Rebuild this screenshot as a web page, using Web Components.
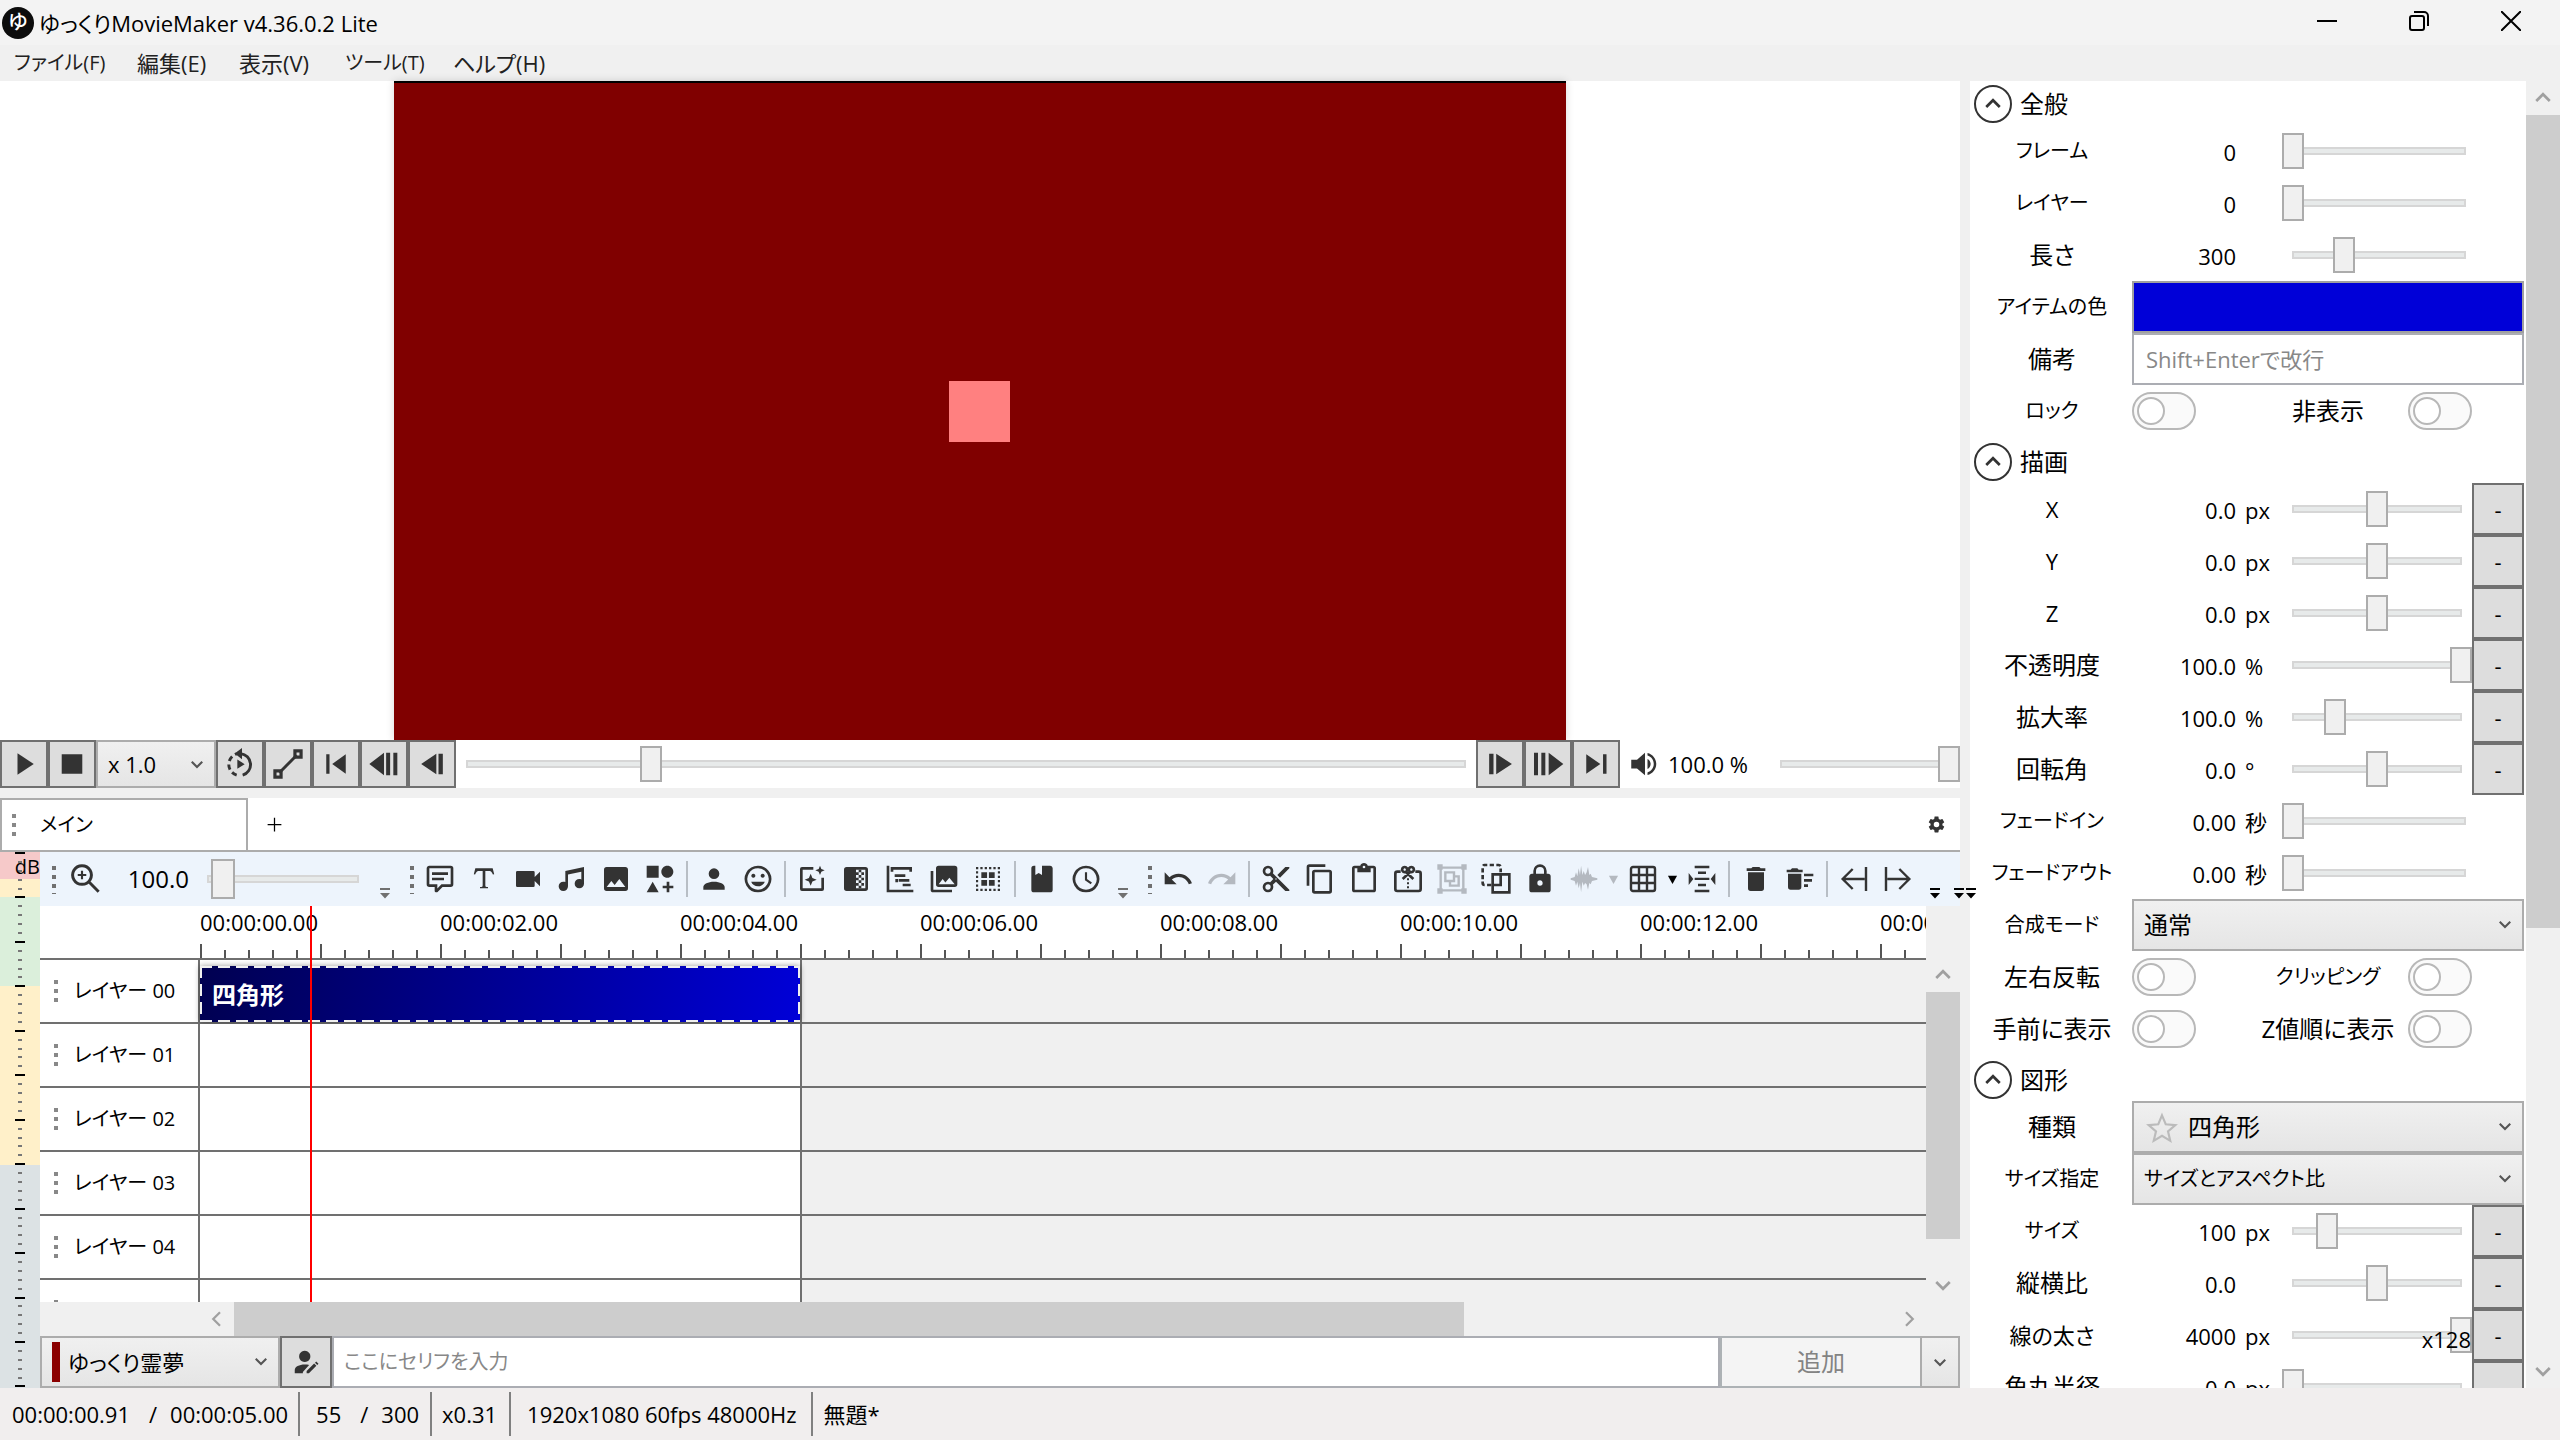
<!DOCTYPE html>
<html lang="ja">
<head>
<meta charset="utf-8">
<title>ゆっくりMovieMaker v4.36.0.2 Lite</title>
<style>
  html, body { margin: 0; height: 100%; overflow: hidden; }
  body { font-family: "Open Sans", "Noto Sans CJK JP", sans-serif; font-size: 22px; line-height: 32px; color: #000; background: #f0f0f0; }
</style>
</head>
<body>
<ymm-app></ymm-app>
<script>
const BASE = `
  :host { display: block; box-sizing: border-box; }
  *, *::before, *::after { box-sizing: border-box; }
  button, input, select { font: inherit; color: inherit; margin: 0; border-radius: 0; font-feature-settings: inherit; }
  button { padding: 0; display: flex; align-items: center; justify-content: center; background: none; border: 0; }
  svg { display: block; flex: none; }
  .kana, input.kana, select.kana { font-size: 20px; }
  .kanji, select.kanji { font-size: 24px; }
`;
const scriptClass = t => {
  const kana = (t.match(/[\u3040-\u30ff]/g) || []).length;
  if (kana > t.length / 2) return 'kana';
  return /[\u4e00-\u9fff]/.test(t) && kana < 2 ? 'kanji' : '';
};
const define = (name, css, html) => customElements.define(name, class extends HTMLElement {
  connectedCallback() {
    if (this.shadowRoot) return;
    const root = this.attachShadow({ mode: 'open' });
    root.innerHTML = `<style>${BASE}${css}</style>${typeof html === 'function' ? html(this) : html}`;
  }
});

/* 24-unit icon shapes */
const F = d => `<path d="${d}"/>`;
const S = (d, w = 2, extra = '') => `<path d="${d}" fill="none" stroke="currentColor" stroke-width="${w}" ${extra}/>`;
const ICONS = {
  play: F('M6 2v20l15-10z'),
  stop: F('M2.500 3h19v18h-19z'),
  loop: S('M12.5 4.2A8.3 8.3 0 0 1 14 20.4', 2.2) + S('M9.5 20.3A8.3 8.3 0 0 1 9.5 4.4', 2.2, 'stroke-dasharray="4 2.6"') + F('M13.5 0v8.4L8 4.2zM10 8.6v7l5.5-3.5z'),
  curve: S('M5.5 18.5L18.5 5.5', 2.2) + S('M2.2 17.2h4.6v4.6H2.2zM17.2 2.2h4.6v4.6h-4.6z', 2.4),
  first: F('M3 3h3v18H3zM21 3v18L8.500 12z'),
  back2: F('M12 3.5v17L1 12zM13.6 3.5h3v17h-3zM19 3.5h3v17h-3z'),
  back1: F('M16 2.500v19L2 12zM18 2.500h4v19h-4z'),
  fwd1: F('M2 2.500h4v19H2zM8.500 2.500v19L23 12z'),
  fwd2: F('M1.5 3.5h3v17h-3zM7 3.5h3v17H7zM12.5 3.5v17L23.5 12z'),
  last: F('M3 3v18L16 12zM18.500 3h3.200v18h-3.200z'),
  volume: F('M14 3.23v2.06c2.89.86 5 3.54 5 6.71s-2.11 5.84-5 6.7v2.07c4-.91 7-4.49 7-8.77s-3-7.86-7-8.77M16.5 12c0-1.77-1-3.29-2.5-4.03V16c1.5-.71 2.5-2.24 2.5-4M1 8.5v7h4.6L12 21V3L5.6 8.5z'),
  gear: F('M12,15.5A3.5,3.5 0 0,1 8.5,12A3.5,3.5 0 0,1 12,8.5A3.5,3.5 0 0,1 15.5,12A3.5,3.5 0 0,1 12,15.5M19.43,12.97C19.47,12.65 19.5,12.33 19.5,12C19.5,11.67 19.47,11.34 19.43,11L21.54,9.37C21.73,9.22 21.78,8.95 21.66,8.73L19.66,5.27C19.54,5.05 19.27,4.96 19.05,5.05L16.56,6.05C16.04,5.66 15.5,5.32 14.87,5.07L14.5,2.42C14.46,2.18 14.25,2 14,2H10C9.75,2 9.54,2.18 9.5,2.42L9.13,5.07C8.5,5.32 7.96,5.66 7.44,6.05L4.95,5.05C4.73,4.96 4.46,5.05 4.34,5.27L2.34,8.73C2.21,8.95 2.27,9.22 2.46,9.37L4.57,11C4.53,11.34 4.5,11.67 4.5,12C4.5,12.33 4.53,12.65 4.57,12.97L2.46,14.63C2.27,14.78 2.21,15.05 2.34,15.27L4.34,18.73C4.46,18.95 4.73,19.03 4.95,18.95L7.44,17.94C7.96,18.34 8.5,18.68 9.13,18.93L9.5,21.58C9.54,21.82 9.75,22 10,22H14C14.25,22 14.46,21.82 14.5,21.58L14.87,18.93C15.5,18.67 16.04,18.34 16.56,17.94L19.05,18.95C19.27,19.03 19.54,18.95 19.66,18.73L21.66,15.27C21.78,15.05 21.73,14.78 21.54,14.63L19.43,12.97Z'),
  plus: S('M12 1v22M1 12h22', 2),
  zoomin: S('M9 2a7 7 0 1 0 .01 0M14.3 14.3L21.5 21.5', 2.2) + S('M9 5.8v6.4M5.8 9h6.4', 1.6),
  comment: F('M9,22A1,1 0 0,1 8,21V18H4A2,2 0 0,1 2,16V4C2,2.89 2.9,2 4,2H20A2,2 0 0,1 22,4V16A2,2 0 0,1 20,18H13.9L10.2,21.71C10,21.9 9.75,22 9.5,22V22H9M10,16V19.08L13.08,16H20V4H4V16H10M6,7H18V9H6V7M6,11H15V13H6V11Z'),
  text: F('M18.5,4L19.66,8.35L18.7,8.61C18.25,7.74 17.79,6.87 17.26,6.43C16.73,6 16.11,6 15.5,6H13V16.5C13,17 13,17.5 13.33,17.75C13.67,18 14.33,18 15,18V19H9V18C9.67,18 10.33,18 10.67,17.75C11,17.5 11,17 11,16.5V6H8.5C7.89,6 7.27,6 6.74,6.43C6.21,6.87 5.75,7.74 5.3,8.61L4.34,8.35L5.5,4H18.5Z'),
  video: F('M17,10.5V7A1,1 0 0,0 16,6H4A1,1 0 0,0 3,7V17A1,1 0 0,0 4,18H16A1,1 0 0,0 17,17V13.5L21,17.5V6.5L17,10.5Z'),
  music: F('M21,3V15.5A3.5,3.5 0 0,1 17.5,19A3.5,3.5 0 0,1 14,15.5A3.5,3.5 0 0,1 17.5,12C18.04,12 18.55,12.12 19,12.34V6.47L9,8.6V17.5A3.5,3.5 0 0,1 5.5,21A3.5,3.5 0 0,1 2,17.5A3.5,3.5 0 0,1 5.5,14C6.04,14 6.55,14.12 7,14.34V6L21,3Z'),
  image: F('M8.5,13.5L11,16.5L14.5,12L19,18H5M21,19V5C21,3.89 20.1,3 19,3H5A2,2 0 0,0 3,5V19A2,2 0 0,0 5,21H19A2,2 0 0,0 21,19Z'),
  shapes: F('M2,2H11V11H2V2M17.5,2C20,2 22,4 22,6.5C22,9 20,11 17.5,11C15,11 13,9 13,6.5C13,4 15,2 17.5,2M6.5,14L11,22H2L6.5,14M19,17H22V19H19V22H17V19H14V17H17V14H19V17Z'),
  person: F('M12,4A4,4 0 0,1 16,8A4,4 0 0,1 12,12A4,4 0 0,1 8,8A4,4 0 0,1 12,4M12,14C16.42,14 20,15.79 20,18V20H4V18C4,15.79 7.58,14 12,14Z'),
  smile: S('M12 3a9 9 0 1 0 .01 0', 2) + F('M12,17.5C14.33,17.5 16.3,16.04 17.11,14H6.89C7.69,16.04 9.67,17.5 12,17.5M8.5 8A1.5 1.5 0 1 0 8.51 8M15.5 8A1.5 1.5 0 1 0 15.51 8'),
  effect: S('M13 4H4.5a.5.5 0 0 0-.5.5v15a.5.5 0 0 0 .5.5h15a.5.5 0 0 0 .5-.5V11', 2) + F('M11 8l1.3 3.2L15.5 12.5l-3.2 1.3L11 17l-1.3-3.2L6.5 12.5l3.2-1.3zM18 2l1 2.5L21.5 5.5 19 6.5 18 9l-1-2.5L14.5 5.5 17 4.5z'),
  checker: F('M5 3h14a2 2 0 0 1 2 2v14a2 2 0 0 1-2 2H5a2 2 0 0 1-2-2V5a2 2 0 0 1 2-2zM12 5v14h7V5z" fill-rule="evenodd') + F('M10 5h2v2h-2zM14 5h2v2h-2zM12 7h2v2h-2zM16 7h2v2h-2zM14 9h2v2h-2zM12 11h2v2h-2zM16 11h2v2h-2zM14 13h2v2h-2zM12 15h2v2h-2zM16 15h2v2h-2zM14 17h2v2h-2z'),
  chart: S('M3 2v19h19', 2) + S('M6 6.500v-2.500h14v2.500M8 9.500h8M11 13h8M14 16.500h6M9.500 12v2.500', 2),
  images: F('M22,16V4A2,2 0 0,0 20,2H8A2,2 0 0,0 6,4V16A2,2 0 0,0 8,18H20A2,2 0 0,0 22,16M11,12L13.03,14.71L16,11L20,16H8M2,6V20A2,2 0 0,0 4,22H18V20H4V6'),
  scene: S('M3 3.8h18M3 20.2h18M3.8 3v18M20.2 3v18', 1.6, 'stroke-dasharray="1.7 1.56"') + F('M7 7h4.3v4.3H7zM12.7 7H17v4.3h-4.3zM7 12.7h4.3V17H7zM12.7 12.7H17V17h-4.3z'),
  book: F('M18,22A2,2 0 0,0 20,20V4C20,2.89 19.1,2 18,2H12V9L9.5,7.5L7,9V2H6A2,2 0 0,0 4,4V20A2,2 0 0,0 6,22H18Z'),
  clock: S('M12 3a9 9 0 1 0 .01 0', 2) + S('M12 7v5.5l4 2.8', 1.6),
  undo: F('M12.5,8C9.85,8 7.45,9 5.6,10.6L2,7V16H11L7.38,12.38C8.77,11.22 10.54,10.5 12.5,10.5C16.04,10.5 19.05,12.81 20.1,16L22.47,15.22C21.08,11.03 17.15,8 12.5,8Z'),
  redo: F('M11.5,8C14.15,8 16.55,9 18.4,10.6L22,7V16H13L16.62,12.38C15.23,11.22 13.46,10.5 11.5,10.5C7.96,10.5 4.95,12.81 3.9,16L1.53,15.22C2.92,11.03 6.85,8 11.5,8Z'),
  cut: F('M19,3L13,9L15,11L22,4V3M12,12.5A0.5,0.5 0 0,1 11.5,12A0.5,0.5 0 0,1 12,11.5A0.5,0.5 0 0,1 12.5,12A0.5,0.5 0 0,1 12,12.5M6,20A2,2 0 0,1 4,18C4,16.89 4.9,16 6,16A2,2 0 0,1 8,18C8,19.11 7.1,20 6,20M6,8A2,2 0 0,1 4,6C4,4.89 4.9,4 6,4A2,2 0 0,1 8,6C8,7.11 7.1,8 6,8M9.64,7.64C9.87,7.14 10,6.59 10,6A4,4 0 0,0 6,2A4,4 0 0,0 2,6A4,4 0 0,0 6,10C6.59,10 7.14,9.87 7.64,9.64L10,12L7.64,14.36C7.14,14.13 6.59,14 6,14A4,4 0 0,0 2,18A4,4 0 0,0 6,22A4,4 0 0,0 10,18C10,17.41 9.87,16.86 9.64,16.36L12,14L19,21H22V20L9.64,7.64Z'),
  copy: F('M19,21H8V7H19M19,5H8A2,2 0 0,0 6,7V21A2,2 0 0,0 8,23H19A2,2 0 0,0 21,21V7A2,2 0 0,0 19,5M16,1H4A2,2 0 0,0 2,3V17H4V3H16V1Z'),
  paste: F('M19,20H5V4H7V7H17V4H19M12,2A1,1 0 0,1 13,3A1,1 0 0,1 12,4A1,1 0 0,1 11,3A1,1 0 0,1 12,2M19,2H14.82C14.4,0.84 13.3,0 12,0C10.7,0 9.6,0.84 9.18,2H5A2,2 0 0,0 3,4V20A2,2 0 0,0 5,22H19A2,2 0 0,0 21,20V4A2,2 0 0,0 19,2Z'),
  split: S('M6.500 6.500H4A1.500 1.500 0 0 0 2.500 8v11.500A1.500 1.500 0 0 0 4 21h16a1.500 1.500 0 0 0 1.500-1.500V8A1.500 1.500 0 0 0 20 6.500h-2.500', 2) + S('M12 11.500v8.500', 1.500, 'stroke-dasharray="1.500 1.500"') + S('M9.500 3a1.900 1.900 0 1 0 .01 0M14.500 3a1.900 1.900 0 1 0 .01 0M10.200 6.500l5.800 5.500M13.800 6.500L8 12', 2),
  group: S('M3.5 3.5h17v17h-17z', 1.8) + F('M1 1h4v4H1zM19 1h4v4h-4zM1 19h4v4H1zM19 19h4v4h-4z') + S('M7 7h6.500v6.500H7zM13.500 10H17v7h-6.500v-3.500', 1.8),
  ungroup: S('M8.5 16.5h-5a1.500 1.500 0 0 1-1.500-1.500V3A1.500 1.500 0 0 1 3.500 1.500H14a1.500 1.500 0 0 1 1.500 1.500v4', 2, 'stroke-dasharray="3.2 1.8"') + S('M9.500 8.500h12.500v13.500H9.500zM9.500 16.500h6v-8', 2),
  lock: F('M12,17A2,2 0 0,0 14,15C14,13.89 13.1,13 12,13A2,2 0 0,0 10,15A2,2 0 0,0 12,17M18,8A2,2 0 0,1 20,10V20A2,2 0 0,1 18,22H6A2,2 0 0,1 4,20V10C4,8.89 4.9,8 6,8H7V6A5,5 0 0,1 12,1A5,5 0 0,1 17,6V8H18M12,3A3,3 0 0,0 9,6V8H15V6A3,3 0 0,0 12,3Z'),
  wave: F('M2 11.5L5 10.5 6 7 7 10 8 4 9 9 9.8 2 10.8 9 11.8 6 12.8 9 14 7 15 3 16 9 17 8 18 10.5 22 11.5v1L18 13.5 17 16 16 15 15 20 14 16 12.8 15 11.8 17 10.8 14 9.8 22 9 15 8 19 7 14 6 17 5 13.5 2 12.5z'),
  grid: S('M4.500 3h15A1.500 1.500 0 0 1 21 4.500v15a1.500 1.500 0 0 1-1.500 1.500h-15A1.500 1.500 0 0 1 3 19.500v-15A1.500 1.500 0 0 1 4.500 3zM9 3v18M15 3v18M3 9h18M3 15h18', 1.8),
  spread: S('M6.5 3h11M9 7.3h6M6.5 11.9h11M9 16.5h6M6.5 21h11', 1.8) + F('M2 7.5v9L5.5 12zM22 7.5v9L18.5 12z'),
  trash: F('M19,4H15.5L14.5,3H9.5L8.5,4H5V6H19M6,19A2,2 0 0,0 8,21H16A2,2 0 0,0 18,19V7H6V19Z'),
  sweep: F('M15,16H18V18H15V16M15,8H22V10H15V8M15,12H21V14H15V12M3,18A2,2 0 0,0 5,20H11A2,2 0 0,0 13,18V8H3V18M14,5H11L10,4H6L5,5H2V7H14V5Z'),
  toleft: S('M21 3v18M20 12H4M11 4.5L3.5 12 11 19.5', 1.8),
  toright: S('M3 3v18M4 12h16M13 4.5L20.5 12 13 19.5', 1.8),
  caret: F('M2 4h20l-10 18z'),
  overflow: F('M2 2h20v4H2zM2 12h20L12 23z'),
  personedit: F('M11 3a4.5 4.5 0 1 1-.01 0M11 14c1.500 0 2.500.1 3.500.4L9.500 20v1H3v-2.500C3 15.800 6.500 14 11 14M20.200 11.500l1.800 1.800-1 1-1.800-1.800zM18.500 13.200l1.800 1.800-6 6h-1.800v-1.800z'),
  star: S('M12 2.5l2.8 6.7 7.2.6-5.5 4.7 1.7 7.1L12 17.8l-6.2 3.8 1.7-7.1L2 9.800l7.2-.6z', 1.6),
  up: S('M3 16l9-9 9 9', 3.6), down: S('M3 8l9 9 9-9', 3.6),
  left: S('M16 3l-9 9 9 9', 3), right: S('M8 3l9 9-9 9', 3)
};
define('ym-icon', `
  :host { display: inline-block; width: var(--s, 32px); height: var(--s, 32px); flex: none; }
  svg { width: 100%; height: 100%; fill: currentColor; }
`, el => `<svg viewBox="0 0 24 24" aria-hidden="true">${ICONS[el.getAttribute('name')]}</svg>`);

define('ym-slider', `
  :host { display: flex; align-items: center; height: 36px; min-width: 0; }
  input { -webkit-appearance: none; appearance: none; width: 100%; height: 100%; padding: 0; outline: 0;
    background:
      linear-gradient(#e7eaea, #e7eaea) center / calc(100% - 24px) 4px no-repeat,
      linear-gradient(#d6d6d6, #d6d6d6) center / calc(100% - 20px) 8px no-repeat; }
  input::-webkit-slider-thumb { -webkit-appearance: none; width: var(--tw, 22px); height: var(--th, 36px); background: #f0f0f0; border: 2px solid #acacac; border-radius: 0; }
`, el => `<input type="range" min="0" max="1000" value="${el.getAttribute('pos')}" aria-label="${el.getAttribute('label')}">`);

define('ym-scrollbar', `
  :host { display: flex; background: #f0f0f0; color: #a0a0a0; --s: 18px; }
  :host([vertical]) { flex-direction: column; width: 34px; }
  button { flex: none; width: 34px; height: 34px; }
  .track { flex: 1; display: flex; min-height: 0; min-width: 0; }
  :host([vertical]) .track { flex-direction: column; }
  .thumb { flex: none; background: #cdcdcd; flex-basis: var(--thumb); }
`, el => {
  const v = el.hasAttribute('vertical');
  return `<button aria-label="戻る"><ym-icon name="${v ? 'up' : 'left'}"></ym-icon></button>
    <div class="track"><div class="thumb"></div></div>
    <button aria-label="進む"><ym-icon name="${v ? 'down' : 'right'}"></ym-icon></button>`;
});

define('ym-titlebar', `
  :host { display: flex; align-items: center; height: 45px; background: #f3f3f3; padding: 0 3px 0 2px; }
  .logo { width: 32px; height: 32px; border-radius: 50%; background: #0c0c0c; color: #fff; font-weight: 500; font-size: 20px; line-height: 30px; text-align: center; }
  h1 { font: inherit; margin: 0 auto 0 5px; font-feature-settings: "palt"; }
  button { width: 92px; height: 42px; align-self: flex-start; }
`, `
  <div class="logo">ゆ</div>
  <h1>ゆっくりMovieMaker v4.36.0.2 Lite</h1>
  <button aria-label="最小化"><svg width="20" height="20" fill="none" stroke="#000" stroke-width="2"><path d="M0 10h20"/></svg></button>
  <button aria-label="元に戻す"><svg width="20" height="20" fill="none" stroke="#000" stroke-width="2"><rect x="1" y="5" width="14" height="14" rx="2"/><path d="M5 1h10a4 4 0 0 1 4 4v10"/></svg></button>
  <button aria-label="閉じる"><svg width="20" height="20" fill="none" stroke="#000" stroke-width="2"><path d="M0 0l20 20M20 0L0 20"/></svg></button>
`);

define('ym-menubar', `
  :host { height: 36px; padding-left: 14px; font-feature-settings: "palt"; color: #212121; }
  nav { display: grid; grid-template-columns: 123px 102px 106px 108px auto; height: 100%; align-items: center; }
  button { justify-content: flex-start; height: 36px; white-space: nowrap; }
`, `<nav><button class="kana">ファイル(F)</button><button>編集(E)</button><button>表示(V)</button><button class="kana">ツール(T)</button><button>ヘルプ(H)</button></nav>`);

define('ym-preview', `
  :host { flex: 1; min-height: 0; background: #fff; display: flex; justify-content: center; }
  .video { height: 100%; aspect-ratio: 16 / 9; background: #800000; border-top: 2px solid #000; display: flex; align-items: center; justify-content: center; box-shadow: 0 0 8px rgba(0,0,0,.15); }
  .shape { height: 61px; width: 61px; background: #ff8080; }
`, `<div class="video"><div class="shape"></div></div>`);

define('ym-transport', `
  :host { display: flex; align-items: center; height: 48px; background: #fff; position: relative; }
  button { width: 48px; height: 48px; background: #ddd; border: 2px solid #707070; color: #333; --s: 26px; }
  button.big { --s: 32px; }
  .speed { width: 120px; height: 48px; position: relative; color: #555; --s: 14px; }
  .speed select { -webkit-appearance: none; appearance: none; width: 100%; height: 100%; padding: 0 10px; border: 2px solid #acacac; background: linear-gradient(#f0f0f0, #e5e5e5); color: #000; }
  .speed ym-icon { position: absolute; right: 12px; top: 17px; pointer-events: none; }
  .seek { flex: 1; }
  .vol { display: flex; align-items: center; width: 150px; padding-left: 10px; color: #333; --s: 30px; }
  .vol output { margin-left: 8px; color: #000; white-space: nowrap; }
  .volume { width: 190px; }
`, `
  <button aria-label="再生"><ym-icon name="play"></ym-icon></button>
  <button aria-label="停止"><ym-icon name="stop"></ym-icon></button>
  <div class="speed"><select aria-label="再生速度"><option>x 1.0</option></select><ym-icon name="down"></ym-icon></div>
  <button class="big" aria-label="ループ"><ym-icon name="loop"></ym-icon></button>
  <button class="big" aria-label="軌道"><ym-icon name="curve"></ym-icon></button>
  <button aria-label="先頭へ"><ym-icon name="first"></ym-icon></button>
  <button class="big" aria-label="早戻し"><ym-icon name="back2"></ym-icon></button>
  <button aria-label="前へ"><ym-icon name="back1"></ym-icon></button>
  <ym-slider class="seek" pos="184" label="再生位置"></ym-slider>
  <button aria-label="次へ"><ym-icon name="fwd1"></ym-icon></button>
  <button class="big" aria-label="早送り"><ym-icon name="fwd2"></ym-icon></button>
  <button aria-label="末尾へ"><ym-icon name="last"></ym-icon></button>
  <div class="vol"><ym-icon name="volume"></ym-icon><output>100.0 %</output></div>
  <ym-slider class="volume" pos="1000" label="音量"></ym-slider>
`);

define('ym-tabs', `
  :host { display: flex; align-items: stretch; height: 54px; background: #fff; border-bottom: 2px solid #acacac; font-feature-settings: "palt"; }
  .tab { width: 248px; border: 2px solid #acacac; border-bottom: 0; justify-content: flex-start; padding-left: 10px; gap: 24px; }
  .grip { width: 4px; height: 22px; background: linear-gradient(#888 4px, transparent 4px) 0 0 / 4px 9px; }
  .add { width: 52px; --s: 15px; }
  .set { width: 48px; margin-left: auto; color: #333; --s: 19px; }
`, `<button class="tab kana"><span class="grip"></span>メイン</button>
  <button class="add" aria-label="追加"><ym-icon name="plus"></ym-icon></button>
  <button class="set" aria-label="設定"><ym-icon name="gear"></ym-icon></button>`);

define('ym-meter', `
  :host { width: 40px; position: relative; background: linear-gradient(#f6c9c9 5%, #fff0c9 5% 8.4%, #dbefdb 8.4% 25%, #fff0c9 25% 58.4%, #dce2e4 58.4%); }
  .ticks { height: 100%; display: flex; flex-direction: column; justify-content: space-between; align-items: center; }
  i { width: 4px; height: 2px; background: #777; }
  i.m { width: 10px; background: #000; }
  b { position: absolute; right: 0; top: 0; font-weight: 400; font-size: 20px; line-height: 30px; }
`, `<div class="ticks">${Array.from({ length: 61 }, (_, n) => `<i${n % 5 ? '' : ' class="m"'}></i>`).join('')}</div><b>dB</b>`);

const tool = (icon, label, off) => `<button aria-label="${label}"${off ? ' disabled' : ''}><ym-icon name="${icon}"></ym-icon></button>`;
define('ym-toolbar', `
  :host { display: flex; align-items: center; height: 54px; background: #edf4fc; padding-left: 10px; position: relative; z-index: 2; }
  .group { display: flex; align-items: center; flex: none; }
  button { width: 44px; height: 44px; color: #333; }
  button:disabled, .drop.off { color: #b4b9c0; }
  .grip { width: 10px; height: 30px; background: linear-gradient(#707070 4px, transparent 4px) 2px 2px / 4px 9px repeat-y; }
  .sep { width: 10px; height: 36px; background: linear-gradient(#b8bec5, #b8bec5) center / 2px 100% no-repeat; }
  .zoom { width: 52px; }
  .val { width: 77px; text-align: right; font-size: 24px; }
  ym-slider { width: 172px; height: 40px; margin: 0 1px 0 8px; --tw: 24px; --th: 40px; }
  .drop { width: 15px; --s: 11px; color: #000; }
  .over { width: 30px; height: 54px; margin-right: 8px; padding-top: 28px; color: #707070; --s: 12px; }
  .over.k { color: #000; margin-right: 0; }
`, `
  <div class="group"><span class="grip"></span><button class="zoom" aria-label="拡大"><ym-icon name="zoomin"></ym-icon></button><output class="val">100.0</output><ym-slider pos="95" label="ズーム"></ym-slider><button class="over" aria-label="その他"><ym-icon name="overflow"></ym-icon></button></div>
  <div class="group"><span class="grip"></span>
    ${tool('comment', 'セリフ')}${tool('text', 'テキスト')}${tool('video', '動画')}${tool('music', '音声')}${tool('image', '画像')}${tool('shapes', '図形')}<span class="sep"></span>
    ${tool('person', '立ち絵')}${tool('smile', '表情')}<span class="sep"></span>
    ${tool('effect', 'エフェクト')}${tool('checker', '場面切り替え')}${tool('chart', '遅延')}${tool('images', '画面の複製')}${tool('scene', 'グループ制御')}<span class="sep"></span>
    ${tool('book', 'テンプレート')}${tool('clock', '履歴')}<button class="over" aria-label="その他"><ym-icon name="overflow"></ym-icon></button></div>
  <div class="group"><span class="grip"></span>
    ${tool('undo', '元に戻す')}${tool('redo', 'やり直し', 1)}<span class="sep"></span>
    ${tool('cut', '切り取り')}${tool('copy', 'コピー')}${tool('paste', '貼り付け')}${tool('split', '分割')}${tool('group', 'グループ化', 1)}${tool('ungroup', 'グループ解除')}${tool('lock', 'ロック')}${tool('wave', '波形', 1)}
    <button class="drop off" aria-label="波形メニュー"><ym-icon name="caret"></ym-icon></button>${tool('grid', 'グリッド')}<button class="drop" aria-label="グリッドメニュー"><ym-icon name="caret"></ym-icon></button>${tool('spread', '間隔を詰める')}<span class="sep"></span>
    ${tool('trash', '削除')}${tool('sweep', 'まとめて削除')}<span class="sep"></span>
    ${tool('toleft', '左へ')}${tool('toright', '右へ')}<button class="over k" aria-label="その他"><ym-icon name="overflow"></ym-icon></button><button class="over k" aria-label="その他"><ym-icon name="overflow"></ym-icon><ym-icon name="overflow"></ym-icon></button></div>
`);

define('ym-layer', `
  :host { display: flex; height: 64px; flex: none; border-bottom: 2px solid #707070; }
  .head { width: 160px; flex: none; background: #fff; border-right: 2px solid #707070; display: flex; align-items: center; padding-left: 14px; gap: 16px; font-feature-settings: "palt"; white-space: nowrap; }
  .grip { width: 4px; height: 22px; background: linear-gradient(#888 4px, transparent 4px) 0 0 / 4px 9px; }
  .lane { width: 602px; background: #fff; border-right: 2px solid #707070; }
`, el => `<div class="head kana"><span class="grip"></span><span>レイヤー ${el.getAttribute('no')}</span></div><div class="lane"><slot></slot></div>`);

define('ym-item', `
  :host { width: 600px; height: 56px; margin-top: 6px; padding-left: 12px; color: #fff; font-weight: 700; font-size: 24px; line-height: 57px;
    --h: repeating-linear-gradient(90deg, #f0f0f0 0 12px, transparent 12px 18px);
    --v: repeating-linear-gradient(#f0f0f0 0 12px, transparent 12px 18px);
    background: var(--h) top / 100% 2px no-repeat, var(--h) bottom / 100% 2px no-repeat, var(--v) left / 2px 100% no-repeat, var(--v) right / 2px 100% no-repeat,
      linear-gradient(100deg, #000050, #0000d8); box-shadow: 0 0 6px rgba(0,0,0,.4); }
`, `<slot></slot>`);

define('ym-timeline', `
  :host { display: grid; grid-template-columns: minmax(0, 1fr) 34px; grid-template-rows: minmax(0, 1fr) 34px; flex: 1; min-height: 0; }
  .view { position: relative; overflow: hidden; display: flex; flex-direction: column; }
  .ruler { height: 54px; flex: none; background: #fff; border-bottom: 2px solid #707070; padding-left: 160px; }
  .marks { height: 52px; display: flex; overflow: hidden;
    background: repeating-linear-gradient(90deg, #555 0 2px, transparent 2px 120px) 0 100% / 100% 14px no-repeat,
                repeating-linear-gradient(90deg, #555 0 2px, transparent 2px 24px) 0 100% / 100% 8px no-repeat; }
  .marks span { width: 240px; flex: none; }
  .head { position: absolute; left: 270px; top: 0; bottom: 0; width: 2px; background: #f00; }
  .v { padding-top: 52px; --thumb: 247px; }
  .h { padding-left: 160px; grid-column: 1; --thumb: 1230px; }
`, `
  <div class="view">
    <div class="ruler"><div class="marks">${[0, 2, 4, 6, 8, 10, 12, 14].map(n => `<span>00:00:${String(n).padStart(2, '0')}.00</span>`).join('')}</div></div>
    <ym-layer no="00"><ym-item>四角形</ym-item></ym-layer>
    ${['01', '02', '03', '04', '05'].map(n => `<ym-layer no="${n}"></ym-layer>`).join('')}
    <div class="head"></div>
  </div>
  <ym-scrollbar vertical class="v"></ym-scrollbar>
  <ym-scrollbar class="h"></ym-scrollbar>
`);

define('ym-serif', `
  :host { display: flex; height: 52px; font-feature-settings: "palt"; }
  .who { width: 240px; position: relative; color: #555; --s: 14px; }
  .who select { -webkit-appearance: none; appearance: none; width: 100%; height: 100%; padding: 0 0 0 26px; border: 2px solid #acacac; background: linear-gradient(#f0f0f0, #e5e5e5); color: #000; }
  .who i { position: absolute; left: 12px; top: 6px; width: 8px; height: 40px; background: #8b0000; }
  .who ym-icon { position: absolute; right: 12px; top: 18px; pointer-events: none; }
  .edit { width: 52px; background: #ddd; border: 2px solid #707070; color: #333; --s: 30px; }
  input { flex: 1; min-width: 0; border: 2px solid #abadb3; background: #fff; padding: 0 10px; }
  input::placeholder { color: #888; }
  .add { width: 202px; border: 2px solid #adb2b5; background: #f4f4f4; color: #838383; }
  .more { width: 40px; margin-left: -2px; border: 2px solid #acacac; background: linear-gradient(#f0f0f0, #e5e5e5); color: #555; --s: 14px; }
`, `
  <div class="who"><select aria-label="キャラクター"><option>ゆっくり霊夢</option></select><i></i><ym-icon name="down"></ym-icon></div>
  <button class="edit" aria-label="キャラクター編集"><ym-icon name="personedit"></ym-icon></button>
  <input class="kana" type="text" aria-label="セリフ" placeholder="ここにセリフを入力">
  <button class="add kanji" disabled>追加</button>
  <button class="more" aria-label="メニュー"><ym-icon name="down"></ym-icon></button>
`);

define('ym-group', `
  :host { margin-bottom: 2px; }
  header { display: flex; align-items: center; height: 44px; padding: 2px 0 0 4px; gap: 8px; }
  button { width: 38px; height: 38px; border: 2px solid #333; border-radius: 50%; color: #333; --s: 18px; }
`, el => `<header><button aria-label="折りたたむ"><ym-icon name="up"></ym-icon></button><span class="kanji">${el.getAttribute('name')}</span></header><slot></slot>`);

define('ym-row', `
  :host { display: flex; align-items: center; height: 52px; padding: 0 2px; position: relative; font-feature-settings: "palt"; }
  .name { width: 160px; flex: none; text-align: center; white-space: nowrap; }
  .num { width: 104px; flex: none; text-align: right; }
  .unit { width: 46px; flex: none; padding-left: 9px; white-space: nowrap; }
  .unit, .num { padding-top: 2px; }
  ym-slider { flex: 1; }
  ym-slider.wide { margin-right: 48px; }
  .key { width: 52px; height: 52px; border: 2px solid #707070; background: #ddd; }
  .color { flex: 1; height: 52px; border: 2px solid #a0a0a0; background: #0000d8; }
  input[type=text] { flex: 1; min-width: 0; height: 52px; border: 2px solid #abadb3; padding: 0 12px; background: #fff; }
  input::placeholder { color: #888; }
  .pick { flex: 1; height: 52px; position: relative; color: #555; --s: 14px; }
  .pick select { -webkit-appearance: none; appearance: none; width: 100%; height: 100%; border: 2px solid #acacac; background: linear-gradient(#f0f0f0, #e5e5e5); padding: 0 10px; color: #000; }
  .pick.starred select { padding-left: 54px; }
  .chev { position: absolute; right: 12px; top: 18px; pointer-events: none; }
  .star { position: absolute; left: 14px; top: 11px; color: #bbb; --s: 32px; }
  .cell { width: 116px; display: flex; }
  input[type=checkbox] { -webkit-appearance: none; appearance: none; width: 64px; height: 38px; border: 2px solid #b8b8b8; border-radius: 19px; background: #fafafa; display: flex; align-items: center; padding-left: 3px; }
  input[type=checkbox]::before { content: ""; width: 28px; height: 28px; border-radius: 50%; border: 2px solid #b8b8b8; background: #fff; }
  .mult { position: absolute; right: 55px; top: 14px; }
`, el => {
  const a = n => el.getAttribute(n);
  const label = (t, id) => `<label class="name ${scriptClass(t)}" for="${id}">${t}</label>`;
  switch (a('kind')) {
    case 'color': return `${label(a('name'), 'c')}<button id="c" class="color" aria-label="色を選択"></button>`;
    case 'text': return `${label(a('name'), 'c')}<input id="c" type="text" placeholder="${a('hint')}">`;
    case 'pick': return `${label(a('name'), 'c')}<div class="pick${a('star') !== null ? ' starred' : ''}"><select id="c" class="${scriptClass(a('value'))}"><option>${a('value')}</option></select>${a('star') !== null ? '<ym-icon class="star" name="star"></ym-icon>' : ''}<ym-icon class="chev" name="down"></ym-icon></div>`;
    case 'toggles': return `${label(a('name'), 'c')}<div class="cell"><input id="c" type="checkbox"></div>${label(a('second'), 'd')}<div class="cell"><input id="d" type="checkbox"></div>`;
    default: return `<span class="name ${scriptClass(a('name'))}">${a('name')}</span><output class="num">${a('value')}</output><span class="unit">${a('unit') || ''}</span>
      <ym-slider label="${a('name')}" pos="${a('pos')}"${a('key') === null ? ' class="wide"' : ''}></ym-slider>${a('key') !== null ? '<button class="key">-</button>' : ''}${a('mult') ? `<span class="mult">${a('mult')}</span>` : ''}`;
  }
});

define('ym-properties', `
  :host { display: grid; grid-template-columns: minmax(0, 1fr) 34px; min-height: 0; }
  .list { background: #fff; overflow: hidden; min-height: 0; }
  ym-scrollbar { --thumb: 813px; }
`, `
  <div class="list">
    <ym-group name="全般">
      <ym-row name="フレーム" value="0" pos="0"></ym-row>
      <ym-row name="レイヤー" value="0" pos="0"></ym-row>
      <ym-row name="長さ" value="300" pos="297"></ym-row>
      <ym-row kind="color" name="アイテムの色"></ym-row>
      <ym-row kind="text" name="備考" hint="Shift+Enterで改行"></ym-row>
      <ym-row kind="toggles" name="ロック" second="非表示"></ym-row>
    </ym-group>
    <ym-group name="描画">
      <ym-row name="X" value="0.0" unit="px" pos="500" key></ym-row>
      <ym-row name="Y" value="0.0" unit="px" pos="500" key></ym-row>
      <ym-row name="Z" value="0.0" unit="px" pos="500" key></ym-row>
      <ym-row name="不透明度" value="100.0" unit="%" pos="1000" key></ym-row>
      <ym-row name="拡大率" value="100.0" unit="%" pos="250" key></ym-row>
      <ym-row name="回転角" value="0.0" unit="°" pos="500" key></ym-row>
      <ym-row name="フェードイン" value="0.00" unit="秒" pos="0"></ym-row>
      <ym-row name="フェードアウト" value="0.00" unit="秒" pos="0"></ym-row>
      <ym-row kind="pick" name="合成モード" value="通常"></ym-row>
      <ym-row kind="toggles" name="左右反転" second="クリッピング"></ym-row>
      <ym-row kind="toggles" name="手前に表示" second="Z値順に表示"></ym-row>
    </ym-group>
    <ym-group name="図形">
      <ym-row kind="pick" name="種類" value="四角形" star></ym-row>
      <ym-row kind="pick" name="サイズ指定" value="サイズとアスペクト比"></ym-row>
      <ym-row name="サイズ" value="100" unit="px" pos="202" key></ym-row>
      <ym-row name="縦横比" value="0.0" pos="500" key></ym-row>
      <ym-row name="線の太さ" value="4000" unit="px" pos="1000" key mult="x128"></ym-row>
      <ym-row name="角丸半径" value="0.0" unit="px" pos="0" key></ym-row>
    </ym-group>
  </div>
  <ym-scrollbar vertical></ym-scrollbar>
`);

define('ym-status', `
  :host { display: flex; align-items: center; height: 52px; background: #f1eeee; white-space: pre; }
  span { height: 44px; line-height: 44px; border-right: 2px solid #808080; padding: 0 14px 0 16px; }
  span:first-of-type { padding: 0 10px 0 12px; }
  .tight { padding: 0 12px 0 10px; }
  .count { padding-right: 11px; }
  span:last-of-type { border: 0; padding-left: 11px; }
  i { font-style: normal; padding: 0 13px 0 19px; }
`, `<span>00:00:00.91<i>/</i>00:00:05.00</span><span class="count">55<i>/</i>300</span><span class="tight">x0.31</span><span>1920x1080 60fps 48000Hz</span><span>無題*</span>`);

define('ymm-app', `
  :host { display: flex; flex-direction: column; height: 100vh; }
  main { flex: 1; min-height: 0; display: grid; grid-template-columns: minmax(0, 1fr) 590px; column-gap: 10px; }
  .left { display: flex; flex-direction: column; min-height: 0; min-width: 0; }
  .editor { margin-top: 10px; height: 590px; display: flex; flex-direction: column; }
  .body { flex: 1; min-height: 0; display: flex; }
  .work { flex: 1; min-width: 0; display: flex; flex-direction: column; }
`, `
  <ym-titlebar></ym-titlebar>
  <ym-menubar></ym-menubar>
  <main>
    <div class="left">
      <ym-preview></ym-preview>
      <ym-transport></ym-transport>
      <section class="editor">
        <ym-tabs></ym-tabs>
        <div class="body">
          <ym-meter></ym-meter>
          <div class="work">
            <ym-toolbar></ym-toolbar>
            <ym-timeline></ym-timeline>
            <ym-serif></ym-serif>
          </div>
        </div>
      </section>
    </div>
    <ym-properties></ym-properties>
  </main>
  <ym-status></ym-status>
`);
</script>
</body>
</html>
